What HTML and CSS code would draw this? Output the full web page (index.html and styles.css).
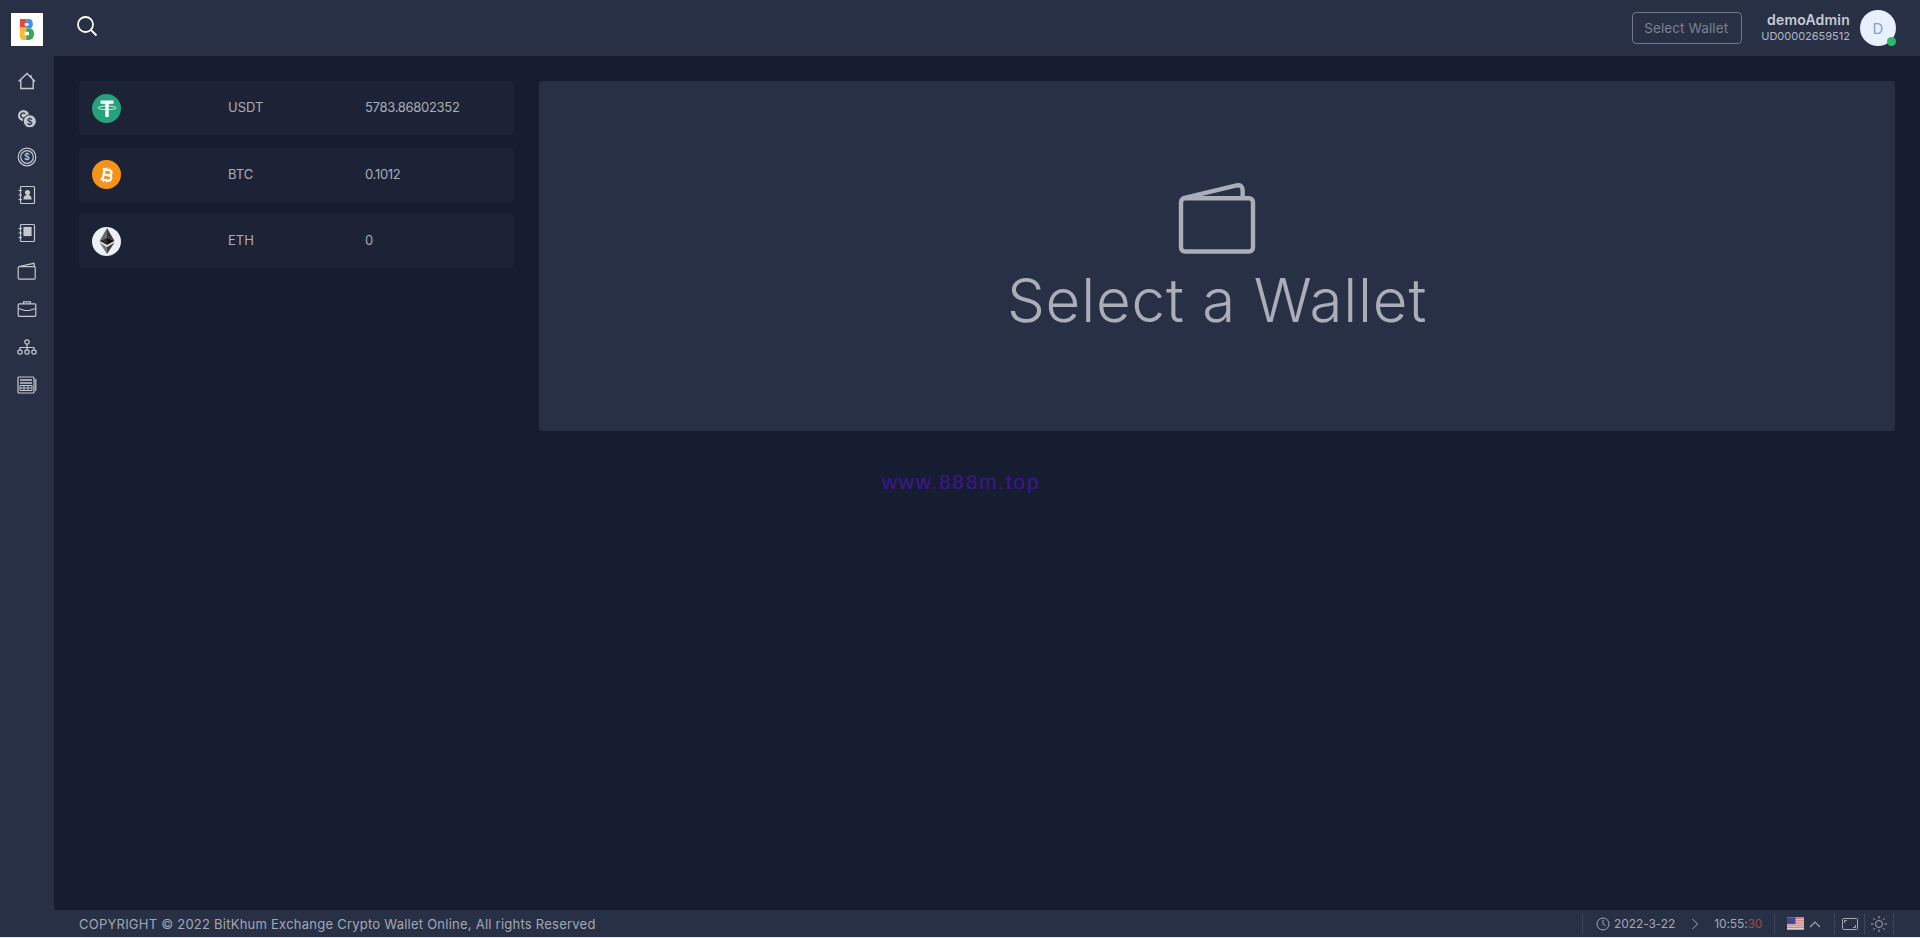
FILE: index.html
```html
<!DOCTYPE html>
<html lang="en">
<head>
    <meta charset="UTF-8">
    <title>Wallet</title>
    <link rel="stylesheet" href="styles.css">
</head>
<body>
    <div class="app">
        <!-- Sidebar -->
        <aside class="sidebar">
            <div class="logo">
                <svg width="14" height="21" viewBox="0 0 18 22" fill="none" preserveAspectRatio="none">
                    <path d="M0 0H8V9H0Z" fill="#e8453c"/>
                    <path d="M0 9H8V22H4Q0 22 0 18Z" fill="#f9bb2d"/>
                    <path d="M8 0H11Q16.500 0 16.500 5.500Q16.500 8 14 10H8Z" fill="#4a90e2"/>
                    <path d="M8 10H14Q18 11.500 18 15.500Q18 22 11 22H8Z" fill="#3aa757"/>
                    <rect x="6" y="4.500" width="5" height="2.500" fill="#fff"/>
                    <rect x="6" y="13.500" width="5.500" height="3.500" fill="#fff"/>
                </svg>
            </div>
            <nav class="side-nav">
                <a class="nav-item" href="#">
                    <svg width="20" height="20" viewBox="0 0 20 20" fill="none" stroke="currentColor" stroke-width="1.400"><path d="M1.500 10.500 10 2.500l8 8"/><path d="M3.800 8.500v9h12.400v-9"/><path d="M14 4v3"/></svg>
                </a>
                <a class="nav-item" href="#">
                    <svg width="20" height="20" viewBox="0 0 20 20"><circle cx="6.500" cy="6.500" r="5.500" fill="currentColor"/><path d="M8 4.700A2.500 2.500 0 1 0 8 8.300" fill="none" stroke="#283046" stroke-width="1.200"/><circle cx="12.800" cy="12.300" r="6.500" fill="currentColor" stroke="#283046"/><text class="coin-mark" x="12.800" y="15.500" text-anchor="middle">$</text></svg>
                </a>
                <a class="nav-item" href="#">
                    <svg width="20" height="20" viewBox="0 0 20 20" fill="none" stroke="currentColor"><circle cx="10" cy="10" r="8.800" stroke-width="1.200"/><circle cx="10" cy="10" r="6.300" stroke-width="1.200"/><text class="coin-mark" x="10" y="13.300" text-anchor="middle" fill="currentColor" stroke="none">$</text></svg>
                </a>
                <a class="nav-item" href="#">
                    <svg width="20" height="20" viewBox="0 0 20 20" fill="none" stroke="currentColor" stroke-width="1.200"><rect x="3.500" y="1.500" width="14" height="17" rx="1"/><path d="M1.500 5.500h3.500M1.500 10h3.500M1.500 14.500h3.500"/><circle cx="10.500" cy="7.500" r="2" fill="currentColor"/><path d="M7 14q0-3.500 3.500-3.500T14 14Z" fill="currentColor"/></svg>
                </a>
                <a class="nav-item" href="#">
                    <svg width="20" height="20" viewBox="0 0 20 20" fill="none" stroke="currentColor" stroke-width="1.200"><rect x="3.500" y="1.500" width="14" height="17" rx="1"/><path d="M1.500 5.500h3.500M1.500 10h3.500M1.500 14.500h3.500"/><rect x="7" y="4.500" width="7" height="8" fill="currentColor"/></svg>
                </a>
                <a class="nav-item" href="#">
                    <svg width="20" height="20" viewBox="0 0 20 20" fill="none" stroke="currentColor" stroke-width="1.200"><rect x="1.200" y="5.700" width="17" height="12.500" rx="1"/><path d="M2 5.500 17 2.300l.600 3.400"/></svg>
                </a>
                <a class="nav-item" href="#">
                    <svg width="20" height="20" viewBox="0 0 20 20" fill="none" stroke="currentColor" stroke-width="1.200"><rect x="1.200" y="4.800" width="17.600" height="12.500" rx="1"/><path d="M6.500 4.800V2.800h7v2M1.200 9.500 8 11.500h4l6.800-2"/></svg>
                </a>
                <a class="nav-item" href="#">
                    <svg width="20" height="20" viewBox="0 0 20 20" fill="none" stroke="currentColor" stroke-width="1.200"><circle cx="10" cy="5" r="2.200"/><circle cx="3" cy="15" r="2.200"/><circle cx="10" cy="15" r="2.200"/><circle cx="17" cy="15" r="2.200"/><path d="M10 7v6M3 12.800V10.500h14v2.300"/></svg>
                </a>
                <a class="nav-item" href="#">
                    <svg width="20" height="20" viewBox="0 0 20 20" fill="none" stroke="currentColor" stroke-width="1.200"><rect x="1" y="2" width="16" height="16" rx="1"/><path d="M18.800 4v12"/><path d="M3 5h12M3 8h12" stroke-width="1.500"/><path d="M3 10.500h12v5H3ZM7 10.500v5M11 10.500v5M3 13h12" stroke-width="1"/></svg>
                </a>
            </nav>
        </aside>

        <div class="main">
            <!-- Top bar -->
            <header class="topbar">
                <a class="search-btn" href="#">
                    <svg width="22" height="22" viewBox="0 0 22 22" fill="none" stroke="#fff" stroke-width="1.800"><circle cx="9.500" cy="9.500" r="7.500"/><path d="m15 15 5.500 5.500"/></svg>
                </a>
                <div class="topbar-right">
                    <button class="wallet-select">Select Wallet</button>
                    <div class="user-info">
                        <div class="user-name">demoAdmin</div>
                        <div class="user-id">UD00002659512</div>
                    </div>
                    <div class="avatar">D<span class="online"></span></div>
                </div>
            </header>

            <div class="content">
                <!-- Coin list -->
                <section class="coins">
                    <div class="coin-row">
                        <span class="coin-icon usdt">
                            <svg width="28" height="28" viewBox="0 0 28 28" fill="none"><path d="M7.500 6.500h13v3.200h-4.800V23h-3.400V9.700H7.500Z" fill="#fff"/><ellipse cx="14" cy="13.800" rx="9" ry="1.800" stroke="#fff" stroke-width=".8"/></svg>
                        </span>
                        <span class="coin-name">USDT</span>
                        <span class="coin-amount">5783.86802352</span>
                    </div>
                    <div class="coin-row">
                        <span class="coin-icon btc">
                            <svg width="15" height="20" viewBox="0 0 20 24" fill="none" stroke="#fff" stroke-width="3" transform="rotate(12)"><path d="M6 5h6.500a3.300 3.300 0 0 1 0 6.800H6m0 0h7.500a3.500 3.500 0 0 1 0 7H6M6 5v14M3.500 5H7M3.500 19H7"/><path d="M8 2v3M12 2v3M8 19v3M12 19v3" stroke-width="1.500"/></svg>
                        </span>
                        <span class="coin-name">BTC</span>
                        <span class="coin-amount">0.1012</span>
                    </div>
                    <div class="coin-row">
                        <span class="coin-icon eth">
                            <svg width="18" height="28" viewBox="0 0 18 28"><path d="M9 1 1.500 14 9 10.500Z" fill="#6b6b6b"/><path d="M9 1l7.500 13L9 10.500Z" fill="#3a3a3a"/><path d="M1.500 14 9 18V10.500Z" fill="#2e2e2e"/><path d="M16.500 14 9 18V10.500Z" fill="#141414"/><path d="M1.500 15.500 9 27v-7Z" fill="#777"/><path d="M16.500 15.500 9 27v-7Z" fill="#3f3f3f"/></svg>
                        </span>
                        <span class="coin-name">ETH</span>
                        <span class="coin-amount">0</span>
                    </div>
                </section>

                <!-- Wallet panel -->
                <section class="wallet-side">
                    <div class="wallet-panel">
                        <svg width="78" height="71" viewBox="0 0 78 72" fill="none" stroke="#abaeb9" stroke-width="4.500" stroke-linejoin="round"><rect x="2.500" y="15.500" width="73" height="54" rx="4"/><path d="M4 15.500 59 2.500q6-1 6 5v8"/></svg>
                        <h2 class="wallet-title">Select a Wallet</h2>
                    </div>
                    <div class="watermark">www.888m.top</div>
                </section>
            </div>

            <!-- Footer -->
            <footer class="footer">
                <div class="copyright">COPYRIGHT © 2022 BitKhum Exchange Crypto Wallet Online, All rights Reserved</div>
                <div class="status">
                    <div class="status-cell clock">
                        <svg width="14" height="14" viewBox="0 0 14 14" fill="none" stroke="currentColor" stroke-width="1"><circle cx="7" cy="7" r="6"/><path d="M7 3v4l2.500 2"/></svg>
                        <span>2022-3-22</span>
                        <svg class="chev" width="8" height="12" viewBox="0 0 8 12" fill="none" stroke="currentColor" stroke-width="1"><path d="m1.500 1 5 5-5 5"/></svg>
                        <span>10:55:<span class="secs">30</span></span>
                    </div>
                    <div class="status-cell lang">
                        <svg width="17" height="13" viewBox="0 0 18 13"><rect width="18" height="13" fill="#eee"/><path d="M0 1h18M0 3h18M0 5h18M0 7h18M0 9h18M0 11h18" stroke="#c9545a" stroke-width="1"/><rect width="9" height="7" fill="#3c4a8c"/></svg>
                        <svg width="12" height="8" viewBox="0 0 12 8" fill="none" stroke="currentColor" stroke-width="1.200"><path d="m1 7 5-5 5 5"/></svg>
                    </div>
                    <div class="status-cell tool">
                        <svg width="16" height="12" viewBox="0 0 16 12" fill="none" stroke="currentColor" stroke-width="1"><rect x=".5" y=".5" width="15" height="11" rx="1"/><path d="M2.500 5V2.500H5M13.500 7v2.500H11"/></svg>
                    </div>
                    <div class="status-cell tool">
                        <svg width="16" height="16" viewBox="0 0 16 16" fill="none" stroke="currentColor" stroke-width="1"><circle cx="8" cy="8" r="3.500"/><path d="M8 0v2.500M8 13.500V16M0 8h2.500M13.500 8H16M2.300 2.300 4 4M12 12l1.700 1.700M13.700 2.300 12 4M4 12l-1.700 1.700"/></svg>
                    </div>
                </div>
            </footer>
        </div>
    </div>
</body>
</html>
```

FILE: styles.css
```css
* {
    box-sizing: border-box;
}

html,
body {
    height: 100%;
}

body {
    margin: 0;
    background-color: #e4e5e9;
    color: #abaeb9;
    font-family: Inter, "Open Sans", sans-serif;
    font-size: 13px;
    overflow: hidden;
}

.app {
    display: flex;
    height: 937px;
    background-color: #161d31;
}

/* Sidebar */
.sidebar {
    width: 54px;
    flex-shrink: 0;
    background-color: #283046;
}

.logo {
    width: 32px;
    height: 33px;
    margin: 13px 0 0 11px;
    background-color: #fff;
    display: flex;
    align-items: center;
    justify-content: center;
}

.side-nav {
    display: flex;
    flex-direction: column;
    align-items: center;
    margin-top: 25px;
    gap: 18px;
}

.nav-item {
    width: 20px;
    height: 20px;
    display: block;
    color: #c5c8cf;
}

.nav-item svg {
    display: block;
}

.coin-mark {
    font-family: Inter, sans-serif;
    font-size: 9px;
    font-weight: 600;
    fill: #283046;
}

.nav-item svg text[fill] {
    fill: currentColor;
}

/* Main column */
.main {
    flex: 1;
    min-width: 0;
    display: flex;
    flex-direction: column;
}

.topbar {
    height: 56px;
    flex-shrink: 0;
    background-color: #283046;
    display: flex;
    align-items: center;
    justify-content: space-between;
    padding: 0 24px 0 22px;
}

.search-btn {
    display: block;
    height: 22px;
    margin-bottom: 5px;
}

.topbar-right {
    display: flex;
    align-items: center;
}

.wallet-select {
    width: 110px;
    height: 32px;
    margin-right: 19px;
    padding: 0 2px 0 0;
    background: transparent;
    border: 1px solid #727887;
    border-radius: 4px;
    color: #7d8290;
    font-family: inherit;
    font-size: 13.500px;
    letter-spacing: .1px;
}

.user-info {
    text-align: right;
    margin-right: 10px;
}

.user-name {
    font-size: 14px;
    font-weight: 600;
    letter-spacing: .2px;
    color: #c8cad1;
    line-height: 17px;
}

.user-id {
    font-size: 11px;
    color: #b4b7c1;
    line-height: 17px;
}

.avatar {
    width: 36px;
    height: 36px;
    border-radius: 50%;
    background-color: #e8f0fe;
    color: #7f9fe0;
    font-size: 15px;
    display: flex;
    align-items: center;
    justify-content: center;
    position: relative;
}

.online {
    position: absolute;
    right: 0;
    bottom: 0;
    width: 9px;
    height: 9px;
    border-radius: 50%;
    background-color: #2dbb6b;
}

/* Content */
.content {
    flex: 1;
    display: flex;
    padding: 25px 25px 0;
    gap: 25px;
}

.coins {
    width: 435px;
    flex-shrink: 0;
    display: flex;
    flex-direction: column;
    gap: 12.500px;
}

.coin-row {
    height: 54px;
    padding: 0 13px;
    background-color: #1c2336;
    border-radius: 4px;
    display: flex;
    align-items: center;
    color: #abaeb9;
}

.coin-icon {
    width: 29px;
    height: 29px;
    border-radius: 50%;
    display: flex;
    align-items: center;
    justify-content: center;
    flex-shrink: 0;
}

.usdt {
    background-color: #26a17b;
}

.btc {
    background-color: #f7931a;
}

.eth {
    background-color: #edf0f4;
}

.coin-name {
    width: 137px;
    margin-left: 107px;
    margin-bottom: 2px;
}

.coin-amount {
    margin-bottom: 2px;
    letter-spacing: -.3px;
}

.wallet-side {
    flex: 1;
    min-width: 0;
}

.wallet-panel {
    height: 350px;
    padding-top: 102px;
    background-color: #283046;
    border-radius: 4px;
    display: flex;
    flex-direction: column;
    align-items: center;
    justify-content: flex-start;
}

.wallet-title {
    margin: 10px 0 0;
    font-size: 60px;
    font-weight: 300;
    line-height: 72px;
    letter-spacing: .8px;
    color: #abaeb9;
}

.watermark {
    margin: 38px 0 0 343px;
    font-family: "Liberation Sans", sans-serif;
    font-size: 21px;
    line-height: 26px;
    letter-spacing: 1.700px;
    color: #3f1790;
}

/* Footer */
.footer {
    height: 27px;
    flex-shrink: 0;
    background-color: #283046;
    display: flex;
    align-items: center;
    justify-content: space-between;
    padding: 0 26px 0 25px;
    color: #a4a8b3;
}

.copyright {
    font-size: 13px;
    letter-spacing: .24px;
}

.status {
    display: flex;
    align-items: center;
    font-size: 12px;
    letter-spacing: -.1px;
}

.status-cell {
    height: 20px;
    display: flex;
    align-items: center;
    border-left: 1px solid #3f475b;
}

.clock {
    width: 192px;
    padding-left: 13px;
    gap: 4px;
}

.chev {
    margin: 0 11px 0 12px;
}

.secs {
    color: #a9444d;
}

.lang {
    width: 60px;
    padding-left: 12px;
    gap: 5px;
}

.tool {
    width: 30px;
    justify-content: center;
}

.tool:last-child {
    border-right: 1px solid #3f475b;
}
```
